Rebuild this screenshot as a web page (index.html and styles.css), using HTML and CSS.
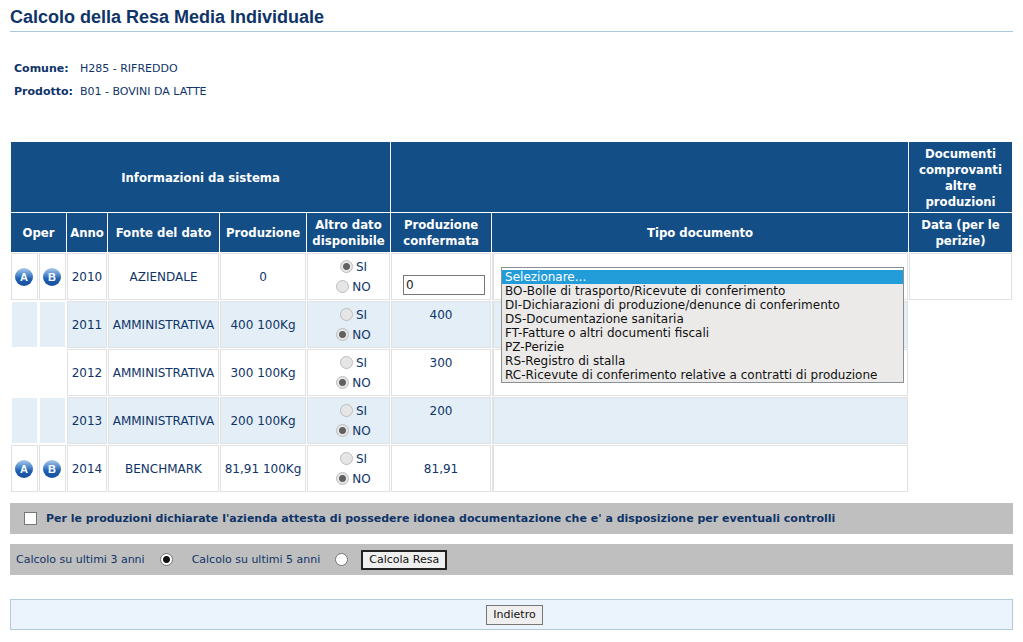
FILE: index.html
```html
<!DOCTYPE html>
<html lang="it">
<head>
<meta charset="utf-8">
<title>Calcolo della Resa Media Individuale</title>
<link rel="stylesheet" href="styles.css">
</head>
<body>
<svg class="defs" width="0" height="0" aria-hidden="true">
  <defs>
    <linearGradient id="ball" x1="0" y1="0" x2="0" y2="1">
      <stop offset="0" stop-color="#a9c8ec"/>
      <stop offset="0.45" stop-color="#4580c6"/>
      <stop offset="0.6" stop-color="#1f5fb2"/>
      <stop offset="1" stop-color="#174f9c"/>
    </linearGradient>
  </defs>
</svg>
<main class="page">
  <h1 class="title">Calcolo della Resa Media Individuale</h1>
  <dl class="info">
    <dt>Comune:</dt><dd>H285 - RIFREDDO</dd>
    <dt>Prodotto:</dt><dd>B01 - BOVINI DA LATTE</dd>
  </dl>
  <form class="form">
    <table class="grid">
      <colgroup>
        <col class="c-op"><col class="c-op"><col class="c-year"><col class="c-source"><col class="c-prod"><col class="c-alt"><col class="c-conf"><col class="c-type"><col class="c-date">
      </colgroup>
      <thead>
        <tr class="group">
          <th colspan="6">Informazioni da sistema</th>
          <th colspan="2"></th>
          <th>Documenti comprovanti altre produzioni</th>
        </tr>
        <tr class="heads">
          <th colspan="2">Oper</th><th>Anno</th><th>Fonte del dato</th><th>Produzione</th><th>Altro dato disponibile</th><th>Produzione confermata</th><th>Tipo documento</th><th>Data (per le perizie)</th>
        </tr>
      </thead>
      <tbody>
        <tr>
          <td><a href="#a2010" class="op"><svg width="18" height="18" viewBox="0 0 18 18"><circle cx="9" cy="9" r="9" fill="url(#ball)"/><text class="letter" x="9" y="13">A</text></svg></a></td>
          <td><a href="#b2010" class="op"><svg width="18" height="18" viewBox="0 0 18 18"><circle cx="9" cy="9" r="9" fill="url(#ball)"/><text class="letter" x="9" y="13">B</text></svg></a></td>
          <td>2010</td><td>AZIENDALE</td><td>0</td>
          <td><label class="opt"><input type="radio" class="radio" name="r2010" disabled checked>SI</label><label class="opt"><input type="radio" class="radio" name="r2010" disabled>NO</label></td>
          <td class="top"><input type="text" class="amount" value="0" aria-label="Produzione confermata 2010"></td>
          <td class="type">
            <select class="doclist" size="8" aria-label="Tipo documento">
              <option selected>Selezionare...</option>
              <option>BO-Bolle di trasporto/Ricevute di conferimento</option>
              <option>DI-Dichiarazioni di produzione/denunce di conferimento</option>
              <option>DS-Documentazione sanitaria</option>
              <option>FT-Fatture o altri documenti fiscali</option>
              <option>PZ-Perizie</option>
              <option>RS-Registro di stalla</option>
              <option>RC-Ricevute di conferimento relative a contratti di produzione</option>
            </select>
          </td>
          <td></td>
        </tr>
        <tr class="alt">
          <td class="plain"></td><td class="plain"></td>
          <td>2011</td><td>AMMINISTRATIVA</td><td>400 100Kg</td>
          <td><label class="opt"><input type="radio" class="radio" name="r2011" disabled>SI</label><label class="opt"><input type="radio" class="radio" name="r2011" disabled checked>NO</label></td>
          <td class="top">400</td><td class="type"></td><td class="none"></td>
        </tr>
        <tr>
          <td class="none"></td><td class="none"></td>
          <td>2012</td><td>AMMINISTRATIVA</td><td>300 100Kg</td>
          <td><label class="opt"><input type="radio" class="radio" name="r2012" disabled>SI</label><label class="opt"><input type="radio" class="radio" name="r2012" disabled checked>NO</label></td>
          <td class="top">300</td><td class="type"></td><td class="none"></td>
        </tr>
        <tr class="alt">
          <td class="plain"></td><td class="plain"></td>
          <td>2013</td><td>AMMINISTRATIVA</td><td>200 100Kg</td>
          <td><label class="opt"><input type="radio" class="radio" name="r2013" disabled>SI</label><label class="opt"><input type="radio" class="radio" name="r2013" disabled checked>NO</label></td>
          <td class="top">200</td><td class="type"></td><td class="none"></td>
        </tr>
        <tr>
          <td><a href="#a2014" class="op"><svg width="18" height="18" viewBox="0 0 18 18"><circle cx="9" cy="9" r="9" fill="url(#ball)"/><text class="letter" x="9" y="13">A</text></svg></a></td>
          <td><a href="#b2014" class="op"><svg width="18" height="18" viewBox="0 0 18 18"><circle cx="9" cy="9" r="9" fill="url(#ball)"/><text class="letter" x="9" y="13">B</text></svg></a></td>
          <td>2014</td><td>BENCHMARK</td><td>81,91 100Kg</td>
          <td><label class="opt"><input type="radio" class="radio" name="r2014" disabled>SI</label><label class="opt"><input type="radio" class="radio" name="r2014" disabled checked>NO</label></td>
          <td>81,91</td><td class="type"></td><td class="none"></td>
        </tr>
      </tbody>
    </table>
    <div class="bar">
      <label class="attest"><input type="checkbox" class="check">Per le produzioni dichiarate l'azienda attesta di possedere idonea documentazione che e' a disposizione per eventuali controlli</label>
    </div>
    <div class="bar choices">
      <label class="choice">Calcolo su ultimi 3 anni<input type="radio" class="radio" name="anni" checked></label>
      <label class="choice">Calcolo su ultimi 5 anni<input type="radio" class="radio" name="anni"></label>
      <button type="button" class="btn btn-main">Calcola Resa</button>
    </div>
    <div class="footer"><button type="button" class="btn">Indietro</button></div>
  </form>
</main>
</body>
</html>
```
FILE: styles.css
```css
* { box-sizing: border-box; }

body {
  margin: 0;
  background: #fff;
  color: #0f3468;
  font: 11px/16px Verdana, "DejaVu Sans", sans-serif;
}

.defs { position: absolute; }

.page { padding: 6px 10px 0; }

.title {
  margin: 0 0 29px;
  padding-bottom: 3px;
  border-bottom: 1px solid #abc9dc;
  font: bold 18px/22px Arial, "Liberation Sans", sans-serif;
}

.info {
  display: grid;
  grid-template-columns: max-content 1fr;
  column-gap: 7px;
  row-gap: 7px;
  margin: 0 0 41px;
  padding-left: 4px;
}
.info dt { font-weight: bold; }
.info dd { margin: 0; }

.grid {
  width: 100%;
  table-layout: fixed;
  border-spacing: 1px;
  font-size: 12px;
  text-align: center;
}
.c-op { width: 27px; }
.c-year { width: 40px; }
.c-source { width: 111px; }
.c-prod { width: 86px; }
.c-alt { width: 83px; }
.c-conf { width: 100px; }
.c-date { width: 103px; }

.grid th {
  padding: 2px 4px 0;
  background: #134e87;
  color: #fff;
  font: bold 13px/16px Tahoma, Verdana, "DejaVu Sans Condensed", "DejaVu Sans", sans-serif;
}
.grid .heads th { padding: 0; }
.group { height: 70px; }
.heads { height: 39px; }

.grid td {
  height: 47px;
  padding: 0;
  border: 1px solid #dfe1e3;
  white-space: nowrap;
}
.grid .alt td { background: #e3eef6; }
.grid .alt .plain { border-color: #fff; }
.grid .none, .grid .alt .none { border-color: transparent; background: none; }
.grid .top { padding-top: 5px; vertical-align: top; }
.grid .type { position: relative; border-left-width: 2px; }

.op { display: block; height: 18px; padding-right: 1px; }
.op svg { display: block; margin: 0 auto; }
.letter {
  fill: #fff;
  font: bold 11px Arial, "Liberation Sans", sans-serif;
  text-anchor: middle;
}

.opt {
  display: flex;
  align-items: center;
  justify-content: center;
  gap: 3px;
  height: 20px;
  padding-left: 10px;
}

.radio {
  flex: none;
  width: 13px;
  height: 13px;
  margin: 0;
  appearance: none;
  border: 1px solid #777;
  border-radius: 50%;
  background: #fff;
}
.radio:checked { background: radial-gradient(circle, #111 3px, #fff 4px); }
.radio:disabled { border-color: #bcbcbc; background: #e6e6e6; }
.radio:disabled:checked { background: radial-gradient(circle, #606060 3px, #e6e6e6 4px); }

.amount {
  display: block;
  width: 82px;
  height: 20px;
  margin: 16px 0 0 11px;
  padding: 0 2px;
  border: 1px solid #777;
  color: #222;
  font: 12px/16px Verdana, "DejaVu Sans", sans-serif;
}

.doclist {
  position: absolute;
  z-index: 1;
  top: 13px;
  left: 7px;
  width: 403px;
  height: 116px;
  padding: 2px 0 0;
  overflow: hidden;
  border: 1px solid #8a8f94;
  border-radius: 0;
  background: linear-gradient(#fff 2px, #ebeae9 2px);
  color: #111;
  font: 12px/14px Verdana, "DejaVu Sans", sans-serif;
}
.doclist option {
  height: 14px;
  min-height: 14px;
  padding: 0 3px;
  line-height: 14px;
}
.doclist option:checked {
  background: linear-gradient(#239cda, #239cda);
  color: #fff !important;
}

.bar {
  display: flex;
  align-items: center;
  height: 31px;
  margin-top: 10px;
  background: #bfbfbf;
}
.attest {
  display: flex;
  align-items: center;
  gap: 9px;
  padding-left: 14px;
  font-weight: bold;
}
.check {
  width: 13px;
  height: 13px;
  margin: 0;
  appearance: none;
  border: 1px solid #777;
  background: #fff;
}
.check:checked { box-shadow: inset 0 0 0 3px #fff; background: #111; }

.choices { padding-left: 6px; }
.choice {
  display: flex;
  align-items: center;
  gap: 15px;
  margin-right: 19px;
}
.choice + .btn { margin-left: -6px; }

.btn {
  height: 20px;
  padding: 0 6px;
  border: 1px solid #777;
  background: #efefef;
  color: #111;
  font: 11px/16px Verdana, "DejaVu Sans", sans-serif;
}
.btn-main { border: 2px solid #222; }

.footer {
  display: flex;
  align-items: center;
  justify-content: center;
  height: 31px;
  margin-top: 24px;
  padding-left: 6px;
  border: 1px solid #b3cad8;
  background: #ebf4fd;
}
```
